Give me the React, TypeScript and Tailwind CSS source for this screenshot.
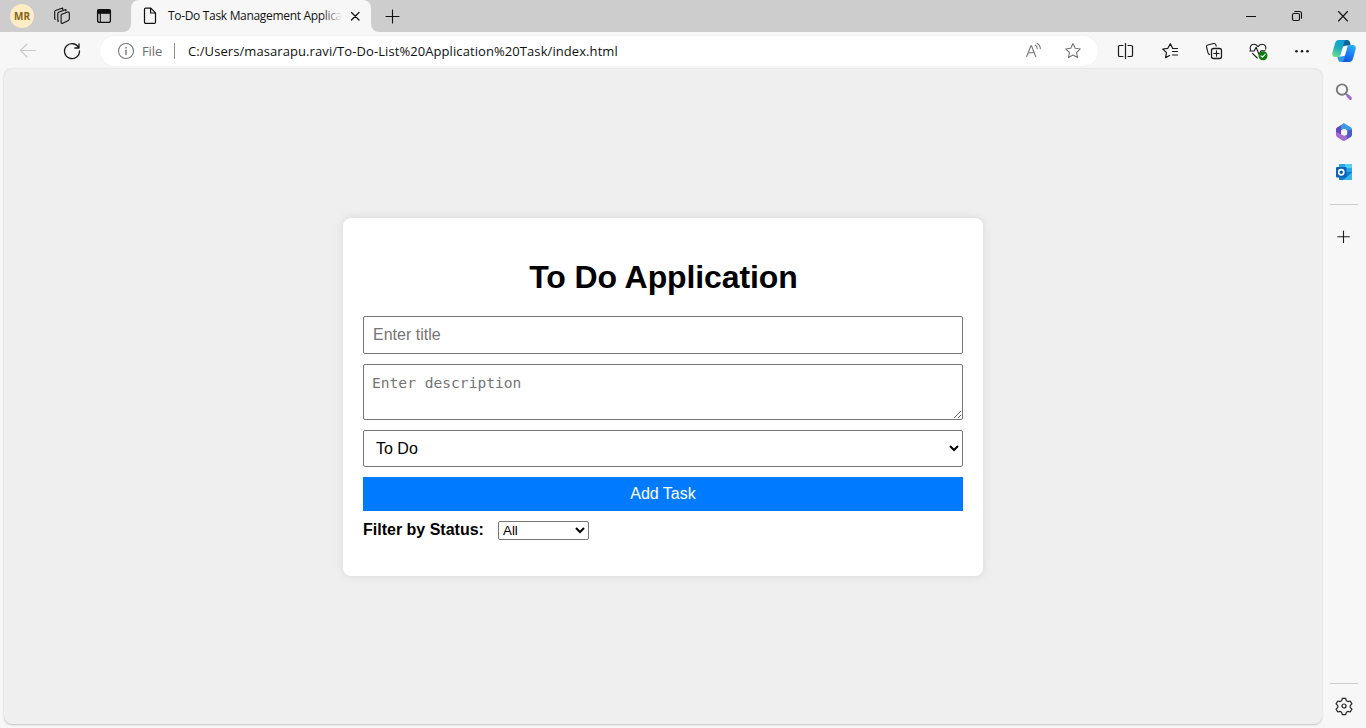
import React from 'react';

type IconProps = { children: React.ReactNode; className?: string; size?: number };

function Icon({ children, className = '', size = 20 }: IconProps) {
  return (
    <svg
      width={size}
      height={size}
      viewBox={`0 0 ${size} ${size}`}
      fill="none"
      stroke="currentColor"
      strokeWidth="1.1"
      strokeLinecap="round"
      strokeLinejoin="round"
      className={`block shrink-0 ${className}`}
    >
      {children}
    </svg>
  );
}

const STAR = 'M10 2.6l2.2 4.7 5.1.65-3.75 3.55.95 5.1L10 14.1l-4.5 2.5.95-5.1L2.7 7.95l5.1-.65z';

function Cell({ children, className = '' }: { children: React.ReactNode; className?: string }) {
  return <div className={`flex shrink-0 items-center justify-center ${className}`}>{children}</div>;
}

function TitleBar() {
  return (
    <header className="flex h-8 shrink-0 bg-[#cdcdcd] text-[#111]">
      <Cell className="w-11">
        <span className="flex h-6 w-6 items-center justify-center rounded-full bg-[#fdecc4] text-[10px] font-bold text-[#856416]">
          MR
        </span>
      </Cell>
      <Cell className="w-9">
        <Icon>
          <path d="M9.300 8.400l6.400-2.300c.8-.3 1.600.2 1.600 1v6c0 .6-.3 1-.9 1.300l-5.700 2.900c-.8.400-1.600 0-1.600-.9V9.300c0-.4 0-.7.200-.9z" />
          <path d="M6.500 14.900l-.7.300V7.400c0-.5.300-.9.800-1.100l7.300-2.900v1.500" />
          <path d="M3.300 13.200l-.6-.3V5.700c0-.5.300-.9.800-1.100L10.700 2v1.500" />
        </Icon>
      </Cell>
      <Cell className="w-[43px] pl-[5px]">
        <Icon>
          <rect x="3.6" y="3.6" width="12.8" height="12.8" rx="2" strokeWidth="1.3" />
          <path d="M3.6 4h12.8v3.3H3.6z" fill="currentColor" />
          <path d="M6.3 7v9" />
        </Icon>
      </Cell>
      <div className="w-2 shrink-0 bg-[#f7f7f7]">
        <div className="h-8 rounded-br-lg bg-[#cdcdcd]" />
      </div>
      <div className="flex w-60 shrink-0 items-center rounded-t-lg bg-[#f7f7f7] pl-[9px]">
        <Icon>
          <path
            d="M4.500 3.300c0-.7.500-1.200 1.200-1.200h5.100l4.700 4.800v9.300c0 .7-.5 1.200-1.200 1.200H5.700c-.7 0-1.200-.5-1.200-1.200zM10.600 2.300V7h4.700"
            strokeWidth="1.2"
          />
        </Icon>
        <div className="relative ml-2 w-[174px] text-xs tracking-[-0.32px] whitespace-nowrap">
          To-Do Task Management Applica
          <div className="absolute inset-y-0 right-0 w-5 bg-gradient-to-r from-[#f7f7f700] to-[#f7f7f7]" />
        </div>
        <Icon className="ml-[3px]">
          <path d="M6.500 6.500l7.500 7.500M14 6.500L6.500 14" strokeWidth="1.3" />
        </Icon>
      </div>
      <div className="w-2 shrink-0 bg-[#f7f7f7]">
        <div className="h-8 rounded-bl-lg bg-[#cdcdcd]" />
      </div>
      <Cell className="w-[26px]">
        <Icon>
          <path d="M10.500 4v13M4 10.500h13" />
        </Icon>
      </Cell>
      <div className="flex-1" />
      <Cell className="w-[46px]">
        <Icon>
          <path d="M5 10.500h10" strokeLinecap="butt" strokeWidth="1" />
        </Icon>
      </Cell>
      <Cell className="w-[46px]">
        <Icon>
          <rect x="5.500" y="7.500" width="7" height="7" rx="1.500" />
          <path d="M7.700 5.500h4.800c1.100 0 2 .9 2 2v4.800" />
        </Icon>
      </Cell>
      <Cell className="w-[46px]">
        <Icon>
          <path d="M5.500 5.500l9 9.500M14.500 5.500l-9 9.500" />
        </Icon>
      </Cell>
    </header>
  );
}

function CopilotLogo() {
  return (
    <svg width="24" height="24" viewBox="0 0 24 24" className="block">
      <defs>
        <linearGradient id="cpLeft" x1="11" y1="1" x2="4" y2="18" gradientUnits="userSpaceOnUse">
          <stop stopColor="#0aa0dc" />
          <stop offset=".5" stopColor="#1fadbc" />
          <stop offset="1" stopColor="#67e08d" />
        </linearGradient>
        <linearGradient id="cpRight" x1="21" y1="6" x2="12" y2="23" gradientUnits="userSpaceOnUse">
          <stop stopColor="#2bb5f3" />
          <stop offset=".5" stopColor="#1a7cf0" />
          <stop offset="1" stopColor="#1554dc" />
        </linearGradient>
      </defs>
      <path d="M11 1h4.200c1.500 0 2.200.8 2.600 2l1 3.600h-4.400c-1.600 0-2.300.9-2.700 2.200L9 14z" fill="#09619e" />
      <path d="M13 23H8.800c-1.500 0-2.200-.8-2.600-2l-1-3.600h4.400c1.600 0 2.300-.9 2.700-2.200L15 10z" fill="#2b9be8" />
      <path
        d="M6.800 1h7.600c-1.500.2-2 1.200-2.500 2.700L9.200 14.500c-.5 2-1.400 3.400-3.500 3.400H3C.6 17.900-.2 16 .400 13.600L2.900 4.800C3.600 2.300 4.700 1 6.800 1z"
        fill="url(#cpLeft)"
      />
      <path
        d="M17.200 23H9.600c1.500-.2 2-1.200 2.500-2.700l2.700-10.800c.5-2 1.400-3.400 3.500-3.400H21c2.400 0 3.200 1.900 2.600 4.300l-2.500 8.800c-.7 2.500-1.800 3.800-3.900 3.800z"
        fill="url(#cpRight)"
      />
      <path d="M11.800 7.200h2.700c.8 0 1 .3.800 1l-2 7.200c-.3 1-1 1.600-1.900 1.600H9.500c-.8 0-1-.5-.8-1.200l1.900-7.300c.2-.8.600-1.300 1.200-1.300z" fill="#fbfcfd" />
    </svg>
  );
}

function Toolbar() {
  return (
    <div className="flex h-[37px] shrink-0 items-center pt-px text-[#1b1b1b]">
      <Cell className="w-14 text-[#c9c9c9]">
        <Icon>
          <path d="M17.700 9.500H2.500M9 3L2.500 9.500 9 16" />
        </Icon>
      </Cell>
      <Cell className="mr-[18px] w-[26px] pl-[6px]">
        <Icon>
          <path d="M16.800 7A7.500 7.500 0 1 0 17.500 10M17 2.800V7h-4.200" strokeWidth="1.3" />
        </Icon>
      </Cell>
      <div className="flex h-[30px] w-[998px] shrink-0 items-center rounded-full bg-white pl-4 shadow-[0_0_2px_rgba(0,0,0,0.06)]">
        <Icon className="text-[#767676]">
          <circle cx="10" cy="10" r="7.500" />
          <path d="M10 9.300v4.200" strokeWidth="1.400" />
          <circle cx="10" cy="6.800" r=".5" fill="currentColor" strokeWidth=".6" />
        </Icon>
        <span className="ml-[6px] w-[22px] pt-0.5 text-[13px] tracking-[-0.1px] text-[#6e6e6e]">File</span>
        <span className="ml-[10px] h-4 w-px bg-[#8c8c8c]" />
        <span className="ml-[13px] flex-1 pt-0.5 text-[13px] tracking-[0.08px] whitespace-nowrap text-[#111]">
          C:/Users/masarapu.ravi/To-Do-List%20Application%20Task/index.html
        </span>
        <Icon className="mr-5 text-[#767676]">
          <path d="M3.700 15.500L7.900 4.800h.6l4.200 10.700M5.200 11.800h6M12.300 4.200c1.200.8 1.900 2 1.900 3.600M14 2.300c2.100 1.200 3.300 3 3.300 5.500" />
        </Icon>
        <Icon className="mr-[15px] text-[#767676]">
          <path d={STAR} />
        </Icon>
      </div>
      <Cell className="ml-[5px] w-11">
        <Icon>
          <path
            d="M8 4.500H4.500C3.700 4.500 3.500 5 3.500 5.500v9c0 .8.500 1 1 1H8M13 4.500h3c.8 0 1.500.5 1.500 1v9c0 .8-.7 1-1.500 1h-3"
            strokeWidth="1.200"
          />
          <path d="M10.500 2.500v15" strokeWidth="1.200" />
        </Icon>
      </Cell>
      <Cell className="ml-px w-11">
        <Icon>
          <path
            d="M17.500 7.500h-4.700L10.300 2.700 7.900 7.300l-5.200.7 3.800 3.600-.9 5 4-2.100M12.500 7.500h5M12.500 10.500h5M12.500 14h5"
            strokeWidth="1.200"
          />
        </Icon>
      </Cell>
      <Cell className="w-11">
        <Icon>
          <rect x="7.500" y="7.500" width="10" height="10" rx="2" strokeWidth="1.300" />
          <path d="M12.500 9.800v5.400M9.800 12.500h5.400M5.700 13.500c-1-.1-1.500-.7-1.700-1.600L2.500 6c-.2-1 .3-1.800 1.200-2l6-1.500c1-.2 1.800.2 2.100 1.200l.4 1.500" />
        </Icon>
      </Cell>
      <Cell className="w-11">
        <Icon>
          <path d="M2.600 9C1.300 6.500 2.700 3.300 5.800 3.300c1.700 0 3 .9 4.200 2.300 1.200-1.400 2.500-2.300 4.200-2.300 2.800 0 4.200 2.500 3.500 4.800M4.500 12.300l4.700 4.700M1.800 10h4.400l1.900-3.800 3 7.300 1.900-3.800h4" />
          <circle cx="15" cy="14.700" r="4.500" fill="#107c10" stroke="none" />
          <path d="M13 14.800l1.400 1.400 2.700-2.900" stroke="#fff" />
        </Icon>
      </Cell>
      <Cell className="w-11">
        <Icon>
          <g fill="currentColor" stroke="none">
            <circle cx="4.500" cy="10.200" r="1.300" />
            <circle cx="10" cy="10.200" r="1.300" />
            <circle cx="15.500" cy="10.200" r="1.300" />
          </g>
        </Icon>
      </Cell>
      <Cell className="ml-2">
        <CopilotLogo />
      </Cell>
    </div>
  );
}

function Sidebar() {
  return (
    <aside className="flex w-11 shrink-0 flex-col items-center pt-[13px]">
      <Icon>
        <circle cx="8" cy="7.600" r="5.200" stroke="#7a7a7a" strokeWidth="1.900" />
        <path d="M11.900 11.600l1.300 1.300" stroke="#7a7a7a" strokeWidth="1.600" />
        <path d="M13.800 13.800l2.600 2.600" stroke="#9c6ade" strokeWidth="3" />
      </Icon>
      <svg width="20" height="20" viewBox="0 0 20 20" className="mt-5 block">
        <path d="M9.800 1.600L3.400 5.200C2.500 5.700 2 6.400 2 7.300v5.800l5-1V8.500L12.500 5z" fill="#6248c0" />
        <path d="M9 1.800c.7-.4 1.600-.4 2.300.1l5.500 3.300c.8.500 1.200 1.200 1.200 2.100v4.200L13.200 9 11 7l-3.800 1.100c-.9-2.200 0-5.100 1.800-6.300z" fill="#3c9ae6" />
        <path d="M18 7.500v5.300c0 .9-.4 1.600-1.200 2.100l-5.400 3.400c-.9.500-1.800.5-2.700 0l-2.400-1.500 6.900-4.300V8.700z" fill="#4a5bc8" />
        <path d="M2 10v3.100c0 .8.400 1.500 1.100 2l5.500 3.300c.7.400 1.500.4 2.200.1 1.700-.9 2.500-2.600 2.400-5L10 13.700l-4-2z" fill="#a86bd0" />
        <path d="M10 6.700l2.900 1.700v3.200L10 13.300l-2.900-1.700V8.400z" fill="#f7f7f7" />
      </svg>
      <svg width="20" height="20" viewBox="0 0 20 20" className="mt-5 block">
        <path d="M6 2h11c.6 0 1 .4 1 1v8H5V3c0-.6.400-1 1-1z" fill="#28a8ea" />
        <path d="M11 2h6c.6 0 1 .4 1 1v3h-7z" fill="#50d0f5" />
        <path d="M5 10h13v7c0 .6-.4 1-1 1H6c-.6 0-1-.4-1-1z" fill="#0f7bd0" />
        <path d="M18 10.500V17c0 .6-.4 1-1 1H9z" fill="#36b5ef" />
        <rect x="2" y="5" width="10.500" height="10.500" rx="1" fill="#0863b5" />
        <circle cx="7.250" cy="10.250" r="2.600" fill="none" stroke="#fff" strokeWidth="1.600" />
      </svg>
      <div className="mt-[22px] h-px w-7 bg-[#cfcfcf]" />
      <Icon className="mt-[22px] text-[#1b1b1b]">
        <path d="M9.500 4v11.500M3.700 9.700h11.600" />
      </Icon>
      <div className="flex-1" />
      <div className="h-px w-7 bg-[#cfcfcf]" />
      <Icon className="mt-3 mb-3 text-[#222]">
        <circle cx="10" cy="10" r="2" strokeWidth="1.200" />
        <path
          d="M8.300 2.400h3.400l.6 2.300 1.600.9 2.300-.6 1.700 2.900-1.700 1.700v1.800l1.700 1.700-1.700 2.900-2.300-.6-1.600.9-.6 2.300H8.300l-.6-2.300-1.600-.9-2.300.6-1.700-2.900 1.700-1.700V9.600L2.100 7.900 3.800 5l2.300.6 1.600-.9z"
          strokeWidth="1.200"
        />
      </Icon>
    </aside>
  );
}

function SelectArrow({ className }: { className: string }) {
  return (
    <svg width="10" height="8" viewBox="0 0 10 8" className={`pointer-events-none absolute ${className}`}>
      <path d="M1 2l4 4 4-4" fill="none" stroke="#000" strokeWidth="2" />
    </svg>
  );
}

function TodoCard() {
  return (
    <section className="h-[358px] w-[640px] rounded-lg bg-white px-5 pt-[41px] font-['Liberation_Sans',Arial,sans-serif] text-base text-black shadow-[0_0_10px_rgba(0,0,0,0.1)]">
      <h1 className="mb-[21px] pl-px text-center text-[32px] leading-9 font-bold tracking-[-0.1px]">To Do Application</h1>
      <form className="flex flex-col gap-[10px]" onSubmit={(e) => e.preventDefault()}>
        <input
          placeholder="Enter title"
          className="h-[38px] w-full rounded-[2px] border border-[#767676] bg-white px-[9px] placeholder:text-[#757575]"
        />
        <textarea
          placeholder="Enter description"
          className="block h-14 w-full resize rounded-[2px] border border-[#767676] bg-white px-2 py-2 font-['DejaVu_Sans_Mono',monospace] text-[14.600px] leading-[19px] placeholder:text-[#757575]"
        />
        <div className="relative h-[37px]">
          <select className="h-full w-full appearance-none rounded-[2px] border border-[#767676] bg-white px-3 pt-0.5">
            <option>To Do</option>
            <option>In Progress</option>
            <option>Done</option>
          </select>
          <SelectArrow className="top-[14px] right-1" />
        </div>
        <button className="h-[34px] bg-[#007bff] text-white">Add Task</button>
      </form>
      <div className="mt-[10px] flex items-start">
        <label className="w-[135px] leading-[18px] font-bold whitespace-nowrap">Filter by Status:</label>
        <div className="relative h-[19px] w-[91px]">
          <select className="block h-[19px] w-full appearance-none rounded-[2px] border border-[#767676] bg-white px-1 pt-px text-[13.333px] leading-4">
            <option>All</option>
            <option>To Do</option>
            <option>In Progress</option>
            <option>Done</option>
          </select>
          <SelectArrow className="top-[5px] right-1" />
        </div>
      </div>
    </section>
  );
}

export default function App() {
  return (
    <div className="flex h-[728px] w-[1366px] flex-col overflow-hidden bg-[#f7f7f7] font-['Open_Sans','Noto_Sans',sans-serif]">
      <TitleBar />
      <Toolbar />
      <div className="flex min-h-0 flex-1">
        <main className="mb-1 ml-1 flex w-[1318px] shrink-0 items-center justify-center rounded-lg bg-[#efefef] shadow-[0_0.5px_2px_rgba(0,0,0,0.22)]">
          <TodoCard />
        </main>
        <Sidebar />
      </div>
    </div>
  );
}
